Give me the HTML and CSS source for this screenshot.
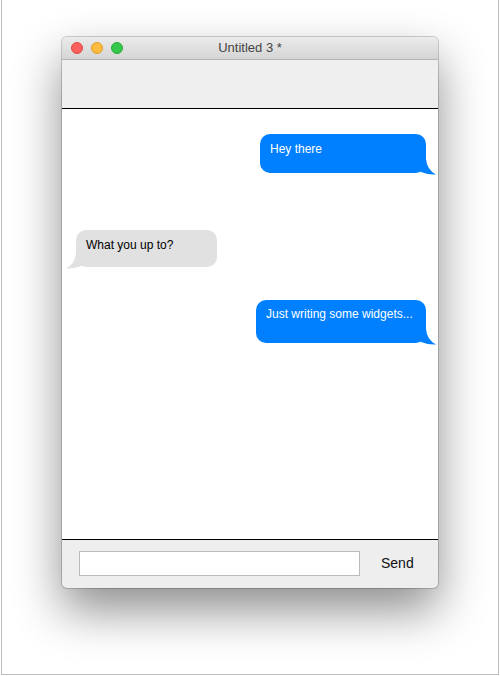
FILE: index.html
```html
<!DOCTYPE html>
<html>
<head>
<meta charset="utf-8">
<link rel="stylesheet" href="styles.css">
</head>
<body>
<div class="frame">
  <div class="window">
    <div class="titlebar">
      <div class="lights">
        <span class="light red"></span>
        <span class="light yellow"></span>
        <span class="light green"></span>
      </div>
      <div class="title">Untitled 3 *</div>
    </div>
    <div class="toolbar"></div>
    <div class="messages">
      <div class="row out row-1">
        <div class="bubble blue b-1">Hey there
          <svg class="tail tail-right" width="16" height="18" viewBox="0 0 16 18"><path d="M1 2 L6 2 Q7 13 16 17.5 Q9 18 1 15 Z" fill="#0080ff"/></svg>
        </div>
      </div>
      <div class="row in row-2">
        <div class="bubble gray b-2">What you up to?
          <svg class="tail tail-left" width="16" height="18" viewBox="0 0 16 18"><path d="M15 2 L10 2 Q9 13 0 17.5 Q7 18 15 15 Z" fill="#e1e1e1"/></svg>
        </div>
      </div>
      <div class="row out row-3">
        <div class="bubble blue b-3">Just writing some widgets...
          <svg class="tail tail-right" width="16" height="18" viewBox="0 0 16 18"><path d="M1 2 L6 2 Q7 13 16 17.5 Q9 18 1 15 Z" fill="#0080ff"/></svg>
        </div>
      </div>
    </div>
    <div class="composer">
      <div class="input"></div>
      <div class="send">Send</div>
    </div>
  </div>
</div>
</body>
</html>
```
FILE: styles.css
```css
html, body {
  margin: 0;
  padding: 0;
  background: #ffffff;
}
body {
  font-family: "Liberation Sans", Arial, sans-serif;
}
.frame {
  margin-left: 1px;
  width: 498px;
  height: 675px;
  box-sizing: border-box;
  border: 1px solid #bdbdbd;
  border-top: none;
  display: flex;
  justify-content: center;
  align-items: flex-start;
  padding-top: 37px;
}
.window {
  width: 376px;
  background: #eeeeee;
  border-radius: 5px;
  box-shadow: 0 0 0 1px rgba(0,0,0,0.18), 0 22px 48px rgba(0,0,0,0.45);
  display: flex;
  flex-direction: column;
  overflow: hidden;
}
.titlebar {
  height: 22px;
  background: linear-gradient(#ebebeb, #d5d5d5);
  border-bottom: 1px solid #b4b4b4;
  display: flex;
  align-items: center;
  position: relative;
}
.lights {
  display: flex;
  gap: 8px;
  padding-left: 9px;
  position: relative;
  z-index: 1;
}
.light {
  width: 12px;
  height: 12px;
  border-radius: 50%;
  box-sizing: border-box;
}
.red { background: #fc605c; border: 1px solid #df4744; }
.yellow { background: #fdbc40; border: 1px solid #de9e27; }
.green { background: #34c84a; border: 1px solid #27aa36; }
.title {
  position: absolute;
  left: 0;
  right: 0;
  text-align: center;
  font-size: 13px;
  color: #444444;
  line-height: 22px;
}
.toolbar {
  height: 48px;
  background: #efefef;
  border-bottom: 1px solid #000;
}
.messages {
  height: 430px;
  background: #ffffff;
  border-bottom: 1px solid #000;
  display: flex;
  flex-direction: column;
}
.row {
  display: flex;
}
.row.out {
  justify-content: flex-end;
  padding-right: 12px;
}
.row.in {
  justify-content: flex-start;
  padding-left: 14px;
}
.row-1 { margin-top: 25px; }
.row-2 { margin-top: 57px; }
.row-3 { margin-top: 33px; }
.bubble {
  position: relative;
  box-sizing: border-box;
  border-radius: 10px;
  font-size: 12px;
  line-height: 14px;
  padding: 8px 10px;
}
.blue {
  background: #0080ff;
  color: #ffffff;
}
.gray {
  background: #e1e1e1;
  color: #000000;
}
.b-1 { width: 166px; height: 39px; }
.b-2 { width: 141px; height: 37px; }
.b-3 { width: 170px; height: 43px; padding-top: 7px; }
.tail {
  position: absolute;
  bottom: -2px;
}
.tail-right { right: -10px; }
.tail-left { left: -10px; }
.composer {
  height: 48px;
  display: flex;
  align-items: flex-start;
  padding: 11px 0 0 17px;
  box-sizing: border-box;
}
.input {
  width: 281px;
  height: 25px;
  box-sizing: border-box;
  background: #fff;
  border: 1px solid #bcbcbc;
}
.send {
  margin-left: 21px;
  font-size: 14px;
  line-height: 25px;
  color: #111;
}
```
